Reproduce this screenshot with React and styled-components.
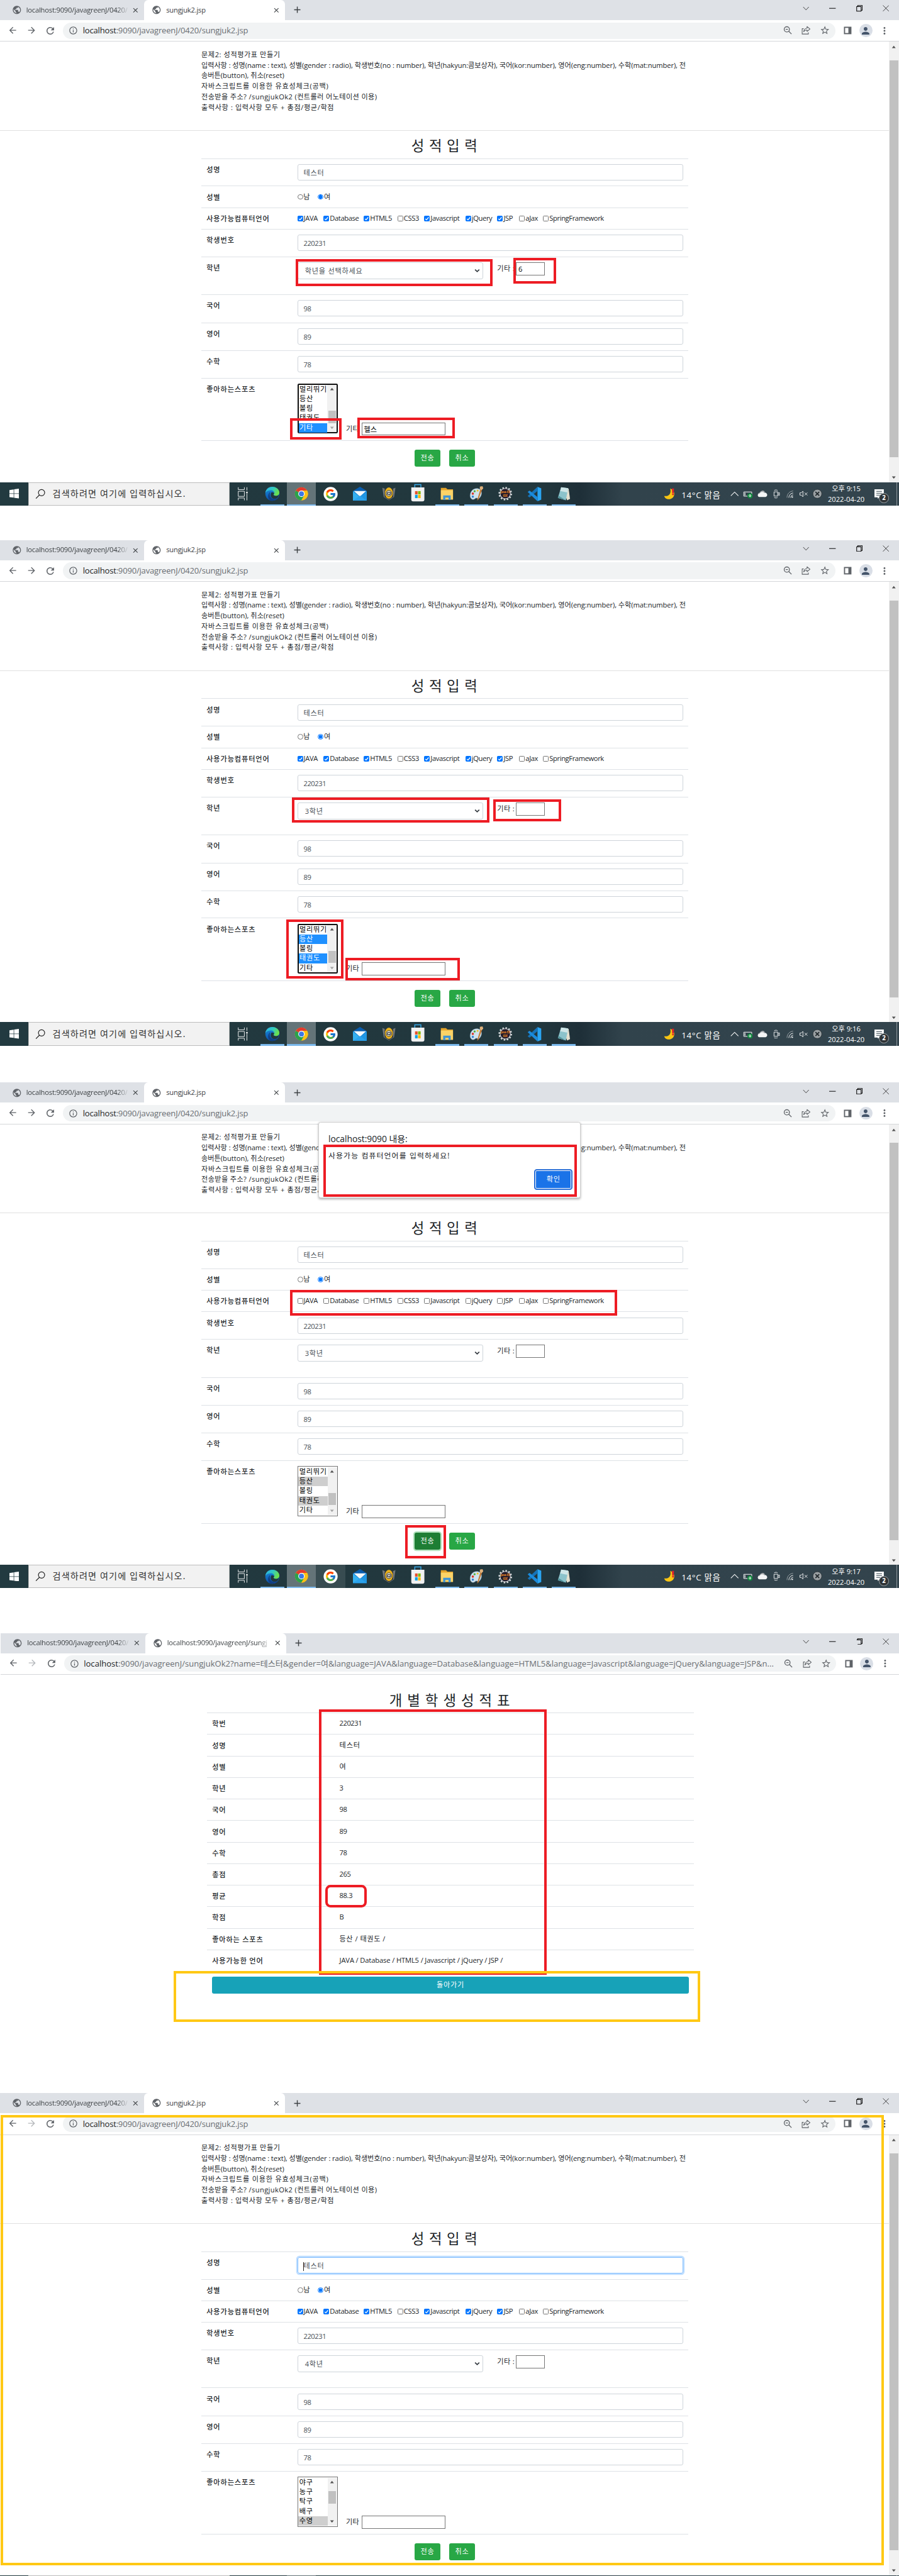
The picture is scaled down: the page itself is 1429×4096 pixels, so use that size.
import React from "react";
import styled, { createGlobalStyle, css } from "styled-components";
import { MdArrowBack, MdArrowForward, MdRefresh, MdPublic, MdInfoOutline, MdStarBorder, MdMoreVert, MdPerson, MdClose, MdAdd } from "react-icons/md";
import { FcGoogle } from "react-icons/fc";

const Global = createGlobalStyle`
  html, body { margin: 0; padding: 0; background: #fff; }
  body { overflow: hidden; }
  * { box-sizing: border-box; }
`;

const Sheet = styled.main`
  zoom: 0.74427;
  width: 1920px;
  height: 5504px;
  overflow: hidden;
  background: #fff;
  color: #212529;
  font-family: "Open Sans", "Noto Sans CJK KR", sans-serif;
  font-size: 15px;
  line-height: 22.5px;
  white-space: nowrap;
`;

const Capture = styled.section`
  position: relative;
  display: flex;
  flex-direction: column;
  width: 1920px;
  height: ${(p) => p.$h || 1080}px;
  margin-top: ${(p) => p.$gap || 0}px;
  padding-left: ${(p) => p.$indent || 0}px;
  overflow: hidden;
`;

/* ---------- browser chrome ---------- */
const TabStrip = styled.div`
  flex: none;
  display: flex;
  height: 43px;
  background: #dee1e6;
  color: #3c4043;
`;
const Tab = styled.div`
  display: flex;
  align-items: center;
  width: ${(p) => (p.$active ? 301 : 308)}px;
  padding: 0 10px 0 ${(p) => (p.$active ? 16 : 25)}px;
  border-radius: 9px 9px 0 0;
  background: ${(p) => (p.$active ? "#fff" : "transparent")};
  svg { flex: none; color: #5f6368; }
  svg:last-child { color: #3c4043; }
`;
const TabTitle = styled.span`
  flex: 1;
  margin: 0 6px 0 10px;
  overflow: hidden;
  letter-spacing: -0.25px;
  ${(p) => p.$fade && css`mask-image: linear-gradient(90deg, #000 88%, transparent);`}
`;
const NewTab = styled.div`
  display: flex;
  align-items: center;
  margin-left: 15px;
  color: #3c4043;
`;
const WindowButtons = styled.div`
  display: flex;
  margin: 11px 21px 0 auto;
  gap: 43px;
  height: 15px;
  svg { display: block; }
`;
const Toolbar = styled.div`
  flex: none;
  display: flex;
  align-items: center;
  height: 46px;
  padding: 0 16px;
  border-bottom: 1px solid #d5d7da;
  color: #5f6368;
  svg { flex: none; display: block; }
`;
const NavIcons = styled.div`
  display: flex;
  gap: 18px;
  width: 119px;
`;
const Omnibox = styled.div`
  flex: none;
  display: flex;
  align-items: center;
  width: 1649px;
  height: 35px;
  padding: 0 11px 0 12px;
  border-radius: 18px;
  background: #f1f3f4;
`;
const Url = styled.span`
  flex: 1;
  margin-left: 10px;
  font-size: 17.5px;
  letter-spacing: ${(p) => (p.$long ? 0.04 : -0.24)}px;
  color: #6a6e73;
  b { font-weight: 400; color: #202124; }
`;
const BoxIcons = styled.div`
  display: flex;
  gap: 18px;
`;
const SideIcons = styled.div`
  display: flex;
  align-items: center;
  gap: 14px;
  margin-left: 17px;
`;
const Avatar = styled.div`
  display: flex;
  align-items: center;
  justify-content: center;
  width: 28px;
  height: 28px;
  border-radius: 50%;
  background: #d9dee6;
  color: #44546a;
`;

/* ---------- page ---------- */
const Viewport = styled.div`
  flex: none;
  display: flex;
  height: 941px;
`;
const Page = styled.div`
  flex: 1;
  display: flex;
  flex-direction: column;
`;
const PageScroll = styled.div`
  display: flex;
  flex-direction: column;
  align-items: center;
  width: 21px;
  height: 941px;
  padding: 8px 0 6px;
  background: #f1f1f1;
`;
const Thumb = styled.div`
  width: ${(p) => p.$w}px;
  height: ${(p) => p.$h}px;
  margin-top: ${(p) => p.$top}px;
  margin-bottom: auto;
  background: #c1c1c1;
`;
const Intro = styled.div`
  height: 190px;
  padding: 17px 0 0 430px;
  border-bottom: 1px solid #e1e1e1;
`;
const IntroLine = styled.p`
  margin: 0;
  letter-spacing: ${(p) => p.$ls}px;
`;
const Heading = styled.h2`
  margin: 0;
  height: ${(p) => p.$h || 59}px;
  padding-top: ${(p) => p.$pad || 15}px;
  line-height: 36px;
  font-size: 30px;
  font-weight: 400;
  letter-spacing: ${(p) => p.$ls || 1.2}px;
  text-align: center;
`;
const Table = styled.div`
  width: ${(p) => p.$w || 1040}px;
  margin-left: ${(p) => p.$x || 430}px;
`;
const Row = styled.div`
  display: flex;
  height: ${(p) => p.$h}px;
  padding: 11px 11px 0;
  border-top: 1px solid #dee2e6;
`;
const Label = styled.div`
  width: ${(p) => p.$w || 194}px;
  font-family: "Noto Sans CJK KR", sans-serif;
  font-weight: 500;
  letter-spacing: 1.2px;
`;
const Field = styled.div`
  flex: 1;
  height: 35px;
  padding: 0 12px;
  border: 1px solid #ced4da;
  border-radius: 4px;
  line-height: 34px;
  letter-spacing: ${(p) => (p.$ko ? 1 : -0.6)}px;
  color: #495057;
  ${(p) => p.$focus && css`
    border-color: #80bdff;
    box-shadow: 0 0 0 3px #bfdeff;
    padding-left: 11px;
  `}
`;
const Caret = styled.i`
  display: inline-block;
  width: 1px;
  height: 19px;
  background: #222;
  vertical-align: middle;
`;
const Grade = styled(Field)`
  flex: none;
  display: flex;
  align-items: center;
  justify-content: space-between;
  width: 397px;
  height: 36px;
  padding: 0 6px 0 15px;
  letter-spacing: 1px;
`;
const Inline = styled.div`
  display: flex;
  align-items: flex-start;
  letter-spacing: ${(p) => p.$ls || 0}px;
`;
const Option = styled.span`
  display: flex;
  align-items: center;
  width: ${(p) => p.$w}px;
`;
const Radio = styled.i`
  width: 12px;
  height: 12px;
  margin-right: 1px;
  border: 1px solid ${(p) => (p.$on ? "#0075ff" : "#767676")};
  border-radius: 50%;
  background: ${(p) => (p.$on ? "radial-gradient(circle, #0075ff 0 3.6px, #fff 4.2px)" : "#fff")};
`;
const Check = styled.i`
  flex: none;
  width: 12px;
  height: 12px;
  margin-right: 1.5px;
  border: 1px solid ${(p) => (p.$on ? "#0075ff" : "#767676")};
  border-radius: 2px;
  background: ${(p) => (p.$on ? "#0075ff" : "#fff")};
  svg { display: block; }
`;
const Extra = styled.span`
  display: flex;
  align-self: ${(p) => (p.$low ? "flex-end" : "flex-start")};
  margin-left: ${(p) => (p.$low ? 17 : 30)}px;
  height: 28px;
  line-height: 26px;
`;
const ExtraLabel = styled.span`
  width: ${(p) => p.$w}px;
  letter-spacing: 0.4px;
`;
const PlainInput = styled.span`
  width: ${(p) => p.$w}px;
  height: ${(p) => p.$h || 28}px;
  padding-left: 4px;
  border: 1px solid #767676;
  background: #fff;
  color: #000;
  line-height: 27px;
`;
const SportCell = styled(Inline)`
  height: 111px;
`;
const ListBox = styled.div`
  display: flex;
  width: 87px;
  height: 107px;
  padding: ${(p) => (p.$focus ? 0 : 1)}px;
  border: ${(p) => (p.$focus ? "2.7px solid #101010" : "1px solid #767676")};
  border-radius: ${(p) => (p.$focus ? 3 : 0)}px;
  background: #fff;
`;
const Items = styled.div`
  flex: 1;
  min-width: 0;
`;
const Item = styled.div`
  height: 20.5px;
  padding-left: 2px;
  line-height: 20px;
  letter-spacing: 1px;
  color: ${(p) => (p.$mark === "blue" ? "#fff" : "#000")};
  background: ${(p) => ({ blue: "#1e90ff", gray: "#cecece" }[p.$mark] || "transparent")};
`;
const ListScroll = styled.div`
  display: flex;
  flex-direction: column;
  align-items: center;
  width: 20px;
  padding: 6px 0;
  background: #f1f1f1;
`;
const Buttons = styled.div`
  display: flex;
  justify-content: center;
  gap: 19px;
  padding-top: 19px;
  border-top: 1px solid #dee2e6;
`;
const Button = styled.span`
  width: 55px;
  height: 36px;
  border-radius: 4px;
  background: ${(p) => (p.$pressed ? "#1e7e34" : "#28a745")};
  box-shadow: ${(p) => (p.$pressed ? "0 0 0 3px #b3e2be" : "none")};
  color: #fff;
  line-height: 35px;
  letter-spacing: 1px;
  text-align: center;
`;
const Back = styled.div`
  height: 36px;
  margin: 12px 11px 0;
  border-radius: 4px;
  background: #17a2b8;
  color: #fff;
  line-height: 35px;
  letter-spacing: 1px;
  text-align: center;
`;
const Value = styled.div`
  letter-spacing: ${(p) => p.$ls}px;
`;

/* ---------- overlays ---------- */
const Mark = styled.div`
  position: absolute;
  left: ${(p) => p.$x}px;
  top: ${(p) => p.$y}px;
  width: ${(p) => p.$w}px;
  height: ${(p) => p.$h}px;
  border: 5.4px solid ${(p) => (p.$yellow ? "#ffc814" : "#ed1c24")};
  border-radius: ${(p) => p.$r || 0}px;
`;
const Dialog = styled.div`
  position: absolute;
  left: 680px;
  top: 84px;
  display: flex;
  flex-direction: column;
  width: 560px;
  height: 163px;
  padding: 23px 20px 0;
  border: 1px solid #cfcfcf;
  border-radius: 5px;
  background: #fff;
  box-shadow: 0 2px 5px rgba(0, 0, 0, 0.3);
`;
const DialogTitle = styled.div`
  font-size: 18.75px;
  line-height: 24px;
  letter-spacing: -0.1px;
`;
const DialogText = styled.div`
  margin-top: 12px;
  font-size: 16px;
  letter-spacing: 1.5px;
`;
const Confirm = styled.div`
  align-self: flex-end;
  margin: 21px -2px 0 0;
  width: 77px;
  height: 38px;
  border: 1.4px solid #fff;
  border-radius: 3px;
  outline: 2.7px solid #2a6fd6;
  background: #1a73e8;
  color: #fff;
  line-height: 35px;
  letter-spacing: 1px;
  text-align: center;
`;

/* ---------- taskbar ---------- */
const Taskbar = styled.footer`
  flex: none;
  display: flex;
  height: 50px;
  background: linear-gradient(90deg, #223a40 0, #22373d 1150px, #1e2f38 1240px, #31434c 1330px, #33444d 1920px);
  color: #fff;
  svg { display: block; flex: none; }
`;
const Start = styled.div`
  display: flex;
  align-items: center;
  justify-content: center;
  width: 60px;
`;
const Search = styled.div`
  display: flex;
  align-items: center;
  width: 430px;
  padding-left: 14px;
  gap: 15px;
  border: 1px solid #bcbcbc;
  background: #f2f2f2;
  color: #333;
  font-size: 19px;
  letter-spacing: 1.5px;
`;
const Apps = styled.div`
  display: flex;
  margin-left: -2px;
`;
const AppSlot = styled.div`
  position: relative;
  display: flex;
  align-items: center;
  justify-content: center;
  width: 62.3px;
  background: ${(p) => (p.$active ? "rgba(255,255,255,.3)" : p.$hover ? "rgba(255,255,255,.1)" : "transparent")};
  &::after {
    content: "";
    position: absolute;
    bottom: 0;
    width: ${(p) => (p.$active ? 62 : 51)}px;
    height: 3px;
    background: ${(p) => (p.$open || p.$active ? "#7ab8ec" : "transparent")};
  }
`;
const Tray = styled.div`
  display: flex;
  align-items: center;
  margin-left: 182px;
`;
const Weather = styled.span`
  width: 105px;
  margin-left: 13px;
  padding-top: 5px;
  font-size: 18px;
  letter-spacing: 0.9px;
`;
const TrayIcons = styled.div`
  display: flex;
  align-items: center;
  gap: 9px;
`;
const Clock = styled.div`
  width: 90px;
  margin-left: 5px;
  text-align: center;
  line-height: 23px;
`;
const Notice = styled.div`
  position: relative;
  width: 31px;
  height: 50px;
  margin-left: 16px;
  padding-top: 15px;
`;
const Badge = styled.b`
  position: absolute;
  left: 9px;
  top: 24px;
  width: 21px;
  height: 21px;
  border: 1px solid #9aa1a5;
  border-radius: 50%;
  background: #2f3335;
  font-size: 13px;
  line-height: 19px;
  text-align: center;
`;
const ShowDesktop = styled.i`
  width: 1px;
  height: 50px;
  margin-left: 15px;
  background: #8c979d;
`;

/* ---------- drawings ---------- */
const Arrow = ({ down, light }) => (
  <svg width="10" height="8" viewBox="0 0 10 8"><path d={down ? "M1 2h8L5 7z" : "M1 6h8L5 1z"} fill={light ? "#a3a3a3" : "#505050"} /></svg>
);
const ZoomOut = () => (
  <svg width="22" height="22" viewBox="0 0 22 22" fill="none" stroke="#5f6368" strokeWidth="1.8"><circle cx="9" cy="9" r="5.6" /><path d="M13.2 13.2L19 19M6.6 9h4.8" /></svg>
);
const Share = () => (
  <svg width="22" height="22" viewBox="0 0 22 22" fill="none" stroke="#5f6368" strokeWidth="1.5" strokeLinejoin="round"><path d="M6 7.5H2.8V19H16v-3.5" /><path d="M13.2 3l6.3 5.2-6.3 5.2v-3c-3.6 0-5.6 1.2-7.2 3.6.6-4.6 3-7 7.2-7.6z" /></svg>
);
const Panel = () => (
  <svg width="20" height="20" viewBox="0 0 20 20"><path d="M2 2h16v16H2z" fill="#5f6368" /><path d="M4.5 4.5h7v11h-7z" fill="#fff" /></svg>
);
const Magnifier = () => (
  <svg width="22" height="22" viewBox="0 0 22 22" fill="none" stroke="#222" strokeWidth="1.6"><circle cx="13.5" cy="8.5" r="6.7" /><path d="M9 13.5L1.500 21" /></svg>
);
const WindowsLogo = () => (
  <svg width="21" height="21" viewBox="0 0 21 21" fill="#fff"><path d="M0 3l9-1.300V10H0zM10 1.500L21 0v10H10zM0 11h9v8.300L0 18zM10 11h11v10l-11-1.500z" /></svg>
);
const TaskView = () => (
  <svg width="22" height="30" viewBox="0 0 22 30" fill="none" stroke="#fff" strokeWidth="1.2"><path d="M1 1v5h13V1M1 29v-5h13v5M1 9.500h13v11H1zM19.500 1v7M19.500 15v14" /><path d="M18 10.500h3v3.500h-3z" fill="#fff" stroke="none" /></svg>
);
const Edge = () => (
  <svg width="32" height="46" viewBox="0 0 32 32" preserveAspectRatio="xMidYMid meet">
    <defs>
      <linearGradient id="eg" x1="0" y1="0" x2="1" y2=".4"><stop offset="0" stopColor="#2bb0ea" /><stop offset=".55" stopColor="#32c9c0" /><stop offset="1" stopColor="#6be04c" /></linearGradient>
      <linearGradient id="eb" x1="0" y1="0" x2="0" y2="1"><stop offset="0" stopColor="#1a8fdd" /><stop offset="1" stopColor="#0c4fa8" /></linearGradient>
    </defs>
    <circle cx="16" cy="16" r="15" fill="url(#eb)" />
    <path d="M1.2 14C2 6 8.500 1 16 1c8.500 0 15 6 15 12.500 0 4.500-3.500 7-7.500 7-3 0-5-1-5-2.500 0-1.200 1.500-1.600 1.500-4 0-3-3-5.500-7-5.500-5 0-9.500 2-11.800 5.500z" fill="url(#eg)" />
    <path d="M12 12c-3 4-2 10 2.500 13.500 3.500 2.500 8.500 2.500 12.500.5-3 3.500-7 5-11 5C10 31 7 26 7 21.500c0-4.500 2-8 5-9.500z" fill="#123f84" />
    <path d="M18.500 18c0 1.500 2 2.500 5 2.500 2.800 0 5-1 6.500-2.800-.4 3-2 6-4 8-4 1.600-8.500 1-11-1.200-3-3-3.500-8-1-11.500 1-.8 5 .5 6 1.500 0 1.800-1.500 2.300-1.500 3.500z" fill="#22373d" />
  </svg>
);
const Chrome = () => (
  <svg width="30" height="30" viewBox="0 0 30 30">
    <circle cx="15" cy="15" r="14" fill="#fbc116" />
    <path d="M15 15L2.900 8A14 14 0 0127.100 8z" fill="#e33b2e" />
    <path d="M2.900 8A14 14 0 0015 29l6-10.500L15 15z" fill="#2ba24c" />
    <path d="M27.100 8H15v7l6 3.500L15 29A14 14 0 0027.100 8z" fill="#fbc116" />
    <circle cx="15" cy="15" r="6.8" fill="#fff" /><circle cx="15" cy="15" r="5.3" fill="#3b78e7" />
  </svg>
);
const GoogleDisc = () => (
  <svg width="31" height="31" viewBox="0 0 31 31"><circle cx="15.5" cy="15.5" r="15" fill="#fff" /><FcGoogle x="3.5" y="3.5" size={24} /></svg>
);
const Mail = () => (
  <svg width="30" height="30" viewBox="0 0 30 30"><path d="M0 10L15 0l15 10v6H0z" fill="#0a5cad" /><path d="M0 9h30v21H0z" fill="#1687d9" /><path d="M0 9L15 0l15 9z" fill="#0a5cad" /><path d="M2 9h26L15 21z" fill="#f4f8fb" /><path d="M0 10l15 12L0 30z" fill="#35b0f0" /><path d="M30 10L15 22l15 8z" fill="#2196e3" /><path d="M0 30l15-11 15 11z" fill="#2ba2ec" /></svg>
);
const Shield = () => (
  <svg width="30" height="30" viewBox="0 0 30 30"><path d="M1 2l7 3 7-4 7 4 7-3-3 20-11 7L4 22z" fill="#73787a" /><path d="M15 1l9 4v17l-9 6-9-6V5z" fill="#2f3233" /><ellipse cx="15" cy="13.5" rx="8.5" ry="12" fill="#e9b21c" /><circle cx="15" cy="14" r="6" fill="#f3efe0" stroke="#333" strokeWidth="1.3" /><path d="M11.500 12h7v4h-3v2M11.500 12v4h3" fill="none" stroke="#333" strokeWidth="1.6" /></svg>
);
const Store = () => (
  <svg width="30" height="44" viewBox="0 0 30 44"><path d="M8.500 9V2h13v7" fill="none" stroke="#38a9e8" strokeWidth="2" /><path d="M1 8h28v33a4 4 0 01-4 3H5a4 4 0 01-4-3z" fill="none" /><path d="M1 8h28v26a4 4 0 01-4 4H5a4 4 0 01-4-4z" fill="#f1f1f1" /><path d="M9 16h5.500v7H9z" fill="#e8502c" /><path d="M15.500 16H21v7h-5.500z" fill="#7fba00" /><path d="M9 24h5.500v7H9z" fill="#00a1e8" /><path d="M15.500 24H21v7h-5.500z" fill="#fbb600" /></svg>
);
const Folder = () => (
  <svg width="28" height="28" viewBox="0 0 28 28"><path d="M1 1h11l3 3h12v22H1z" fill="#e3a32a" /><path d="M1 6h26v20H1z" fill="#fbd367" /><path d="M6 27V17h16v10h-4.500v-5h-7v5z" fill="#3f94d4" /></svg>
);
const Paint = () => (
  <svg width="30" height="32" viewBox="0 0 32 34"><path d="M4 13C8 5 19 3 25 8c5 5 3 15-3 20-3 2-4-2-7-1-3 2-6 5-10 2S1 19 4 13z" fill="#cfe2ee" stroke="#86a9c0" strokeWidth=".8" /><circle cx="8" cy="17" r="2.6" fill="#d8382b" /><circle cx="12" cy="11.5" r="2.4" fill="#4fae3c" /><circle cx="8" cy="24" r="2.5" fill="#2f7fd0" /><circle cx="19" cy="10" r="2.2" fill="#f0c02c" /><path d="M26 4l4 1-9 25-3 3 1-5z" fill="#c47a35" /><path d="M24 1l6-1 2 5-4 4-4-2z" fill="#e0b27c" /></svg>
);
const GearText = styled.text`
  font: 700 6.2px "Open Sans", sans-serif;
  letter-spacing: -0.2px;
  fill: #f08a24;
`;
const Gear = () => (
  <svg width="30" height="32" viewBox="0 0 30 30"><circle cx="15" cy="15" r="12.5" fill="none" stroke="#d4d7d9" strokeWidth="4" strokeDasharray="3.3 3.24" /><circle cx="15" cy="15" r="11" fill="#241c2c" stroke="#c8ccd0" strokeWidth="1.6" /><GearText x="15" y="14" textAnchor="middle">Java EE</GearText><GearText x="15" y="21.5" textAnchor="middle">IDE</GearText></svg>
);
const Code = () => (
  <svg width="31" height="31" viewBox="0 0 31 31"><path d="M22 0l8 3.500v24L22 31z" fill="#2aa5f2" /><path d="M22 0v9L5 23l-4-3.200z" fill="#1573b8" /><path d="M22 31v-9L5 8l-4 3.200z" fill="#1b8bdc" /></svg>
);
const Notepad = () => (
  <svg width="28" height="30" viewBox="0 0 28 30"><path d="M9 2l15 2 3 22-6 3z" fill="#e4e0cf" /><path d="M8 1l15 2-5 26L1 24z" fill="#8cc3cb" /><path d="M8 1l15 2-2 9L6 9z" fill="#cfe6e8" /><path d="M18 29L1 24l1.500-5z" fill="#54949c" /></svg>
);
const Moon = () => (
  <svg width="25" height="25" viewBox="0 0 25 25"><path d="M14 1c5 2 9 6 8.500 12.500C22 20 17 24 11 24 6 24 2 21 1 17c8 1.500 16-3 13-16z" fill="#f9c513" /><path d="M17.500 1h4.500l-.6 10h-3.300z" fill="#e0212b" /><circle cx="19.8" cy="13.5" r="2" fill="#e0212b" /></svg>
);
const trayIcons = (
  <TrayIcons>
    <svg width="18" height="20" viewBox="0 0 18 20" fill="none" stroke="#fff" strokeWidth="1.4"><path d="M1 14l8-8 8 8" /></svg>
    <svg width="21" height="20" viewBox="0 0 21 20"><path d="M1.700 5.700h17v9h-17z" fill="none" stroke="#fff" strokeWidth="1.3" /><path d="M3.500 7.500h1.500v5.500H3.500z" fill="#fff" /><circle cx="15" cy="14" r="5.5" fill="#10893e" /><path d="M15 11v6M13 13l2-2 2 2v2h-4z" stroke="#fff" fill="none" /></svg>
    <svg width="22" height="20" viewBox="0 0 22 20"><path d="M1 13a5 5 0 014-6 6 6 0 0111-1l-9 9z" fill="#a9adb0" /><path d="M4 16.500a3.500 3.500 0 01.5-7 6 6 0 0110-2 4.600 4.600 0 013 9z" fill="#f4f5f6" /></svg>
    <svg width="20" height="20" viewBox="0 0 20 20" fill="none" stroke="#fff" strokeWidth="1.2"><path d="M4.500 5.500h8v9h-8zM12.500 9l3.500-2v6l-3.500-2M5 2.500c2-1.400 5-1.400 7 0M5 17.500c2 1.400 5 1.400 7 0" /></svg>
    <svg width="20" height="20" viewBox="0 0 20 20" fill="none" stroke="#fff" strokeWidth="1.3"><path d="M4 18C4 10 9 4.500 17 3.500" opacity=".5" /><path d="M8 18c0-5.500 4-9.500 9-10M12 18c0-3 2-5.500 5-6" /><circle cx="15.5" cy="16.5" r="1.5" fill="#fff" stroke="none" /></svg>
    <svg width="20" height="20" viewBox="0 0 20 20" fill="none" stroke="#fff" strokeWidth="1.2"><path d="M2 7.500h3L8.500 4v12L5 12.500H2zM12 7l6 6M18 7l-6 6" /></svg>
    <svg width="22" height="22" viewBox="0 0 22 22"><circle cx="11" cy="11" r="9.5" fill="#9aa0a3" stroke="#1d2529" /><path d="M7 7l8 8M15 7l-8 8" stroke="#22292d" strokeWidth="2.4" /></svg>
  </TrayIcons>
);

function BrowserTop({ title = "sungjuk2.jsp", long, forward, cut }) {
  return (
    <>
      <TabStrip>
        <Tab><MdPublic size={21} /><TabTitle $fade>localhost:9090/javagreenJ/0420/</TabTitle><MdClose size={17} /></Tab>
        <Tab $active><MdPublic size={21} /><TabTitle $fade={!!long}>{title}</TabTitle><MdClose size={17} /></Tab>
        <NewTab><MdAdd size={23} /></NewTab>
        <WindowButtons>
          <svg width="14" height="14" viewBox="0 0 14 14" fill="none" stroke="#333" strokeWidth="1.2"><path d="M1 4l6 6.500L13 4" /></svg>
          <svg width="14" height="14" viewBox="0 0 14 14"><path d="M0 7h14" stroke="#000" strokeWidth="1.3" /></svg>
          <svg width="14" height="14" viewBox="0 0 14 14" fill="none" stroke="#000" strokeWidth="1.4"><path d={cut ? "M3 3.500V1H13v10h-2.500M1 3.500h9.500V13H3" : "M1 3.500h9.500V13H1zM3.200 3.500V1H13v10h-2.500"} /></svg>
          <svg width="14" height="14" viewBox="0 0 14 14" fill="none" stroke="#333" strokeWidth="1.2"><path d="M.7.7l12.600 12.600M13.300.7L.7 13.300" /></svg>
        </WindowButtons>
      </TabStrip>
      <Toolbar>
        <NavIcons><MdArrowBack size={22} /><MdArrowForward size={22} color={forward ? "#5f6368" : "#b5b8bc"} /><MdRefresh size={24} /></NavIcons>
        <Omnibox>
          <MdInfoOutline size={20} />
          {long ? <Url $long><b>localhost</b>{long}</Url> : <Url><b>localhost</b>:9090/javagreenJ/0420/sungjuk2.jsp</Url>}
          <BoxIcons><ZoomOut /><Share /><MdStarBorder size={22} /></BoxIcons>
        </Omnibox>
        <SideIcons><Panel /><Avatar><MdPerson size={24} /></Avatar><MdMoreVert size={24} /></SideIcons>
      </Toolbar>
    </>
  );
}

function WindowsBar({ time, hover }) {
  return (
    <Taskbar>
      <Start><WindowsLogo /></Start>
      <Search><Magnifier />검색하려면 여기에 입력하십시오.</Search>
      <Apps>
        <AppSlot><TaskView /></AppSlot>
        <AppSlot $open><Edge /></AppSlot>
        <AppSlot $active><Chrome /></AppSlot>
        <AppSlot $hover={hover}><GoogleDisc /></AppSlot>
        <AppSlot><Mail /></AppSlot>
        <AppSlot><Shield /></AppSlot>
        <AppSlot><Store /></AppSlot>
        <AppSlot $open><Folder /></AppSlot>
        <AppSlot $open><Paint /></AppSlot>
        <AppSlot $open><Gear /></AppSlot>
        <AppSlot $open><Code /></AppSlot>
        <AppSlot $open><Notepad /></AppSlot>
      </Apps>
      <Tray>
        <Moon />
        <Weather>14°C 맑음</Weather>
        {trayIcons}
        <Clock>오후 {time}<br />2022-04-20</Clock>
        <Notice>
          <svg width="20" height="20" viewBox="0 0 20 20"><path d="M0 0h20v17h-9l-4 3v-3H0z" fill="#fff" /><path d="M4 4.500h12M4 8.500h12M4 12.500h8" stroke="#33444d" strokeWidth="1.4" /></svg>
          <Badge>2</Badge>
        </Notice>
        <ShowDesktop />
      </Tray>
    </Taskbar>
  );
}

/* name, column width, checked */
const LANGS = [["JAVA", 56, 1], ["Database", 86, 1], ["HTML5", 72, 1], ["CSS3", 57, 0], ["Javascript", 88, 1], ["jQuery", 68, 1], ["JSP", 47, 1], ["aJax", 51, 0], ["SpringFramework", 140, 0]];
const FAR = ["멀리뛰기", "등산", "볼링", "태권도", "기타"];

function ScoreForm({ grade, other, sports = FAR, picked, mark = "blue", focusList, otherSport, noLangs, pressed, nameFocus, thumbTop = 41, arrowUsable }) {
  return (
    <Viewport>
      <Page>
        <Intro>
          <IntroLine $ls={0.75}>문제2: 성적평가표 만들기</IntroLine>
          <IntroLine $ls={-0.09}>입력사항 : 성명(name : text), 성별(gender : radio), 학생번호(no : number), 학년(hakyun:콤보상자), 국어(kor:number), 영어(eng:number), 수학(mat:number), 전</IntroLine>
          <IntroLine $ls={0}>송버튼(button), 취소(reset)</IntroLine>
          <IntroLine $ls={1}>자바스크립트를 이용한 유효성체크(공백)</IntroLine>
          <IntroLine $ls={0.5}>전송받을 주소? /sungjukOk2 (컨트롤러 어노테이션 이용)</IntroLine>
          <IntroLine $ls={0.8}>출력사항 : 입력사항 모두 + 총점/평균/학점</IntroLine>
        </Intro>
        <Heading>성 적 입 력</Heading>
        <Table>
          <Row $h={59}><Label>성명</Label><Field $ko $focus={nameFocus}>{nameFocus && <Caret />}테스터</Field></Row>
          <Row $h={46}><Label>성별</Label><Inline><Option $w={44}><Radio />남</Option><Option $w={30}><Radio $on />여</Option></Inline></Row>
          <Row $h={46}>
            <Label>사용가능컴퓨터언어</Label>
            <Inline $ls={-0.5}>
              {LANGS.map(([name, w, on]) => (
                <Option key={name} $w={w}>
                  <Check $on={!noLangs && !!on}>{!noLangs && !!on && <svg width="10" height="10" viewBox="0 0 10 10" fill="none" stroke="#fff" strokeWidth="1.7"><path d="M1.500 5.200l2.400 2.400L8.500 2" /></svg>}</Check>
                  {name}
                </Option>
              ))}
            </Inline>
          </Row>
          <Row $h={59}><Label>학생번호</Label><Field>220231</Field></Row>
          <Row $h={81}>
            <Label>학년</Label>
            <Grade>{grade}<svg width="12" height="12" viewBox="0 0 12 12" fill="none" stroke="#343a40" strokeWidth="2.2"><path d="M1.500 3.500L6 8l4.500-4.500" /></svg></Grade>
            <Extra><ExtraLabel $w={40}>기타 :</ExtraLabel><PlainInput $w={61}>{other}</PlainInput></Extra>
          </Row>
          <Row $h={60}><Label>국어</Label><Field>98</Field></Row>
          <Row $h={59}><Label>영어</Label><Field>89</Field></Row>
          <Row $h={59}><Label>수학</Label><Field>78</Field></Row>
          <Row $h={134}>
            <Label>좋아하는스포츠</Label>
            <SportCell>
              <ListBox $focus={focusList}>
                <Items>{sports.map((s, i) => <Item key={s} $mark={picked.includes(i) ? mark : ""}>{s}</Item>)}</Items>
                <ListScroll><Arrow /><Thumb $w={17} $h={26} $top={thumbTop} /><Arrow down light={!arrowUsable} /></ListScroll>
              </ListBox>
              <Extra $low><ExtraLabel $w={33}>기타</ExtraLabel><PlainInput $w={180}>{otherSport}</PlainInput></Extra>
            </SportCell>
          </Row>
          <Buttons><Button $pressed={pressed}>전송</Button><Button>취소</Button></Buttons>
        </Table>
      </Page>
      <PageScroll><Arrow /><Thumb $w={18} $h={848} $top={24} /><Arrow down /></PageScroll>
    </Viewport>
  );
}

const RESULT = [
  ["학번", "220231", -0.6], ["성명", "테스터", 1.1], ["성별", "여"], ["학년", "3"], ["국어", "98", -0.6], ["영어", "89", -0.6], ["수학", "78", -0.6],
  ["총점", "265", -0.6], ["평균", "88.3", -0.5], ["학점", "B"], ["좋아하는 스포츠", "등산 / 태권도 /", 0.7], ["사용가능한 언어", "JAVA / Database / HTML5 / Javascript / jQuery / JSP /", -0.17],
];

export default function App() {
  return (
    <Sheet>
      <Global />
      <Capture>
        <BrowserTop forward />
        <ScoreForm grade="학년을 선택하세요" other="6" picked={[4]} focusList thumbTop={42} otherSport="헬스" />
        <WindowsBar time="9:15" />
        <Mark $x={631} $y={553} $w={421} $h={59} />
        <Mark $x={1097} $y={551} $w={91} $h={55} />
        <Mark $x={619} $y={894} $w={111} $h={45} />
        <Mark $x={763} $y={892} $w={209} $h={45} />
      </Capture>

      <Capture $gap={74}>
        <BrowserTop forward />
        <ScoreForm grade="3학년" picked={[1, 3]} focusList />
        <WindowsBar time="9:16" />
        <Mark $x={623} $y={550} $w={423} $h={53} />
        <Mark $x={1053} $y={554} $w={145} $h={47} />
        <Mark $x={611} $y={810} $w={123} $h={127} />
        <Mark $x={737} $y={892} $w={245} $h={49} />
      </Capture>

      <Capture $gap={79}>
        <BrowserTop forward />
        <ScoreForm grade="3학년" picked={[1, 3]} mark="gray" noLangs pressed />
        <WindowsBar time="9:17" hover />
        <Dialog>
          <DialogTitle>localhost:9090 내용:</DialogTitle>
          <DialogText>사용가능 컴퓨터언어를 입력하세요!</DialogText>
          <Confirm>확인</Confirm>
        </Dialog>
        <Mark $x={691} $y={133} $w={541} $h={111} />
        <Mark $x={619} $y={443} $w={699} $h={55} />
        <Mark $x={865} $y={945} $w={87} $h={71} />
      </Capture>

      <Capture $gap={96} $h={983} $indent={2}>
        <BrowserTop
          title="localhost:9090/javagreenJ/sungj"
          cut
          long=":9090/javagreenJ/sungjukOk2?name=테스터&gender=여&language=JAVA&language=Database&language=HTML5&language=Javascript&language=jQuery&language=JSP&n..."
        />
        <Viewport>
          <Page>
            <Heading $h={81} $pad={38} $ls={1.5}>개 별 학 생 성 적 표</Heading>
            <Table $x={440}>
              {RESULT.map(([k, v, ls]) => (
                <Row key={k} $h={46}><Label $w={272}>{k}</Label><Value $ls={ls || 0}>{v}</Value></Row>
              ))}
              <Back>돌아가기</Back>
            </Table>
          </Page>
        </Viewport>
        <Mark $x={681} $y={163} $w={487} $h={567} />
        <Mark $x={694} $y={538} $w={89} $h={48} $r={11} />
        <Mark $yellow $x={371} $y={722} $w={1125} $h={109} />
      </Capture>

      <Capture $h={1032}>
        <BrowserTop />
        <ScoreForm grade="4학년" sports={["야구", "농구", "탁구", "배구", "수영"]} picked={[4]} mark="gray" nameFocus thumbTop={15} arrowUsable />
        <WindowsBar time="9:17" />
        <Mark $yellow $x={2} $y={47} $w={1886} $h={961} />
      </Capture>
    </Sheet>
  );
}
